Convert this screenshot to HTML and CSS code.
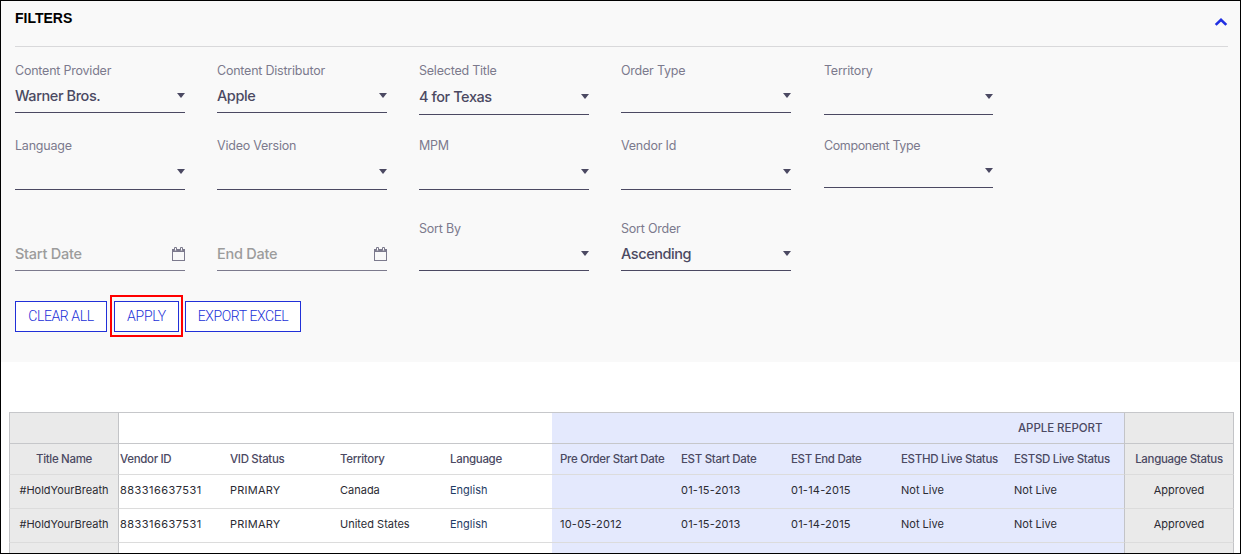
FILE: index.html
```html
<!DOCTYPE html>
<html lang="en">
<head>
<meta charset="utf-8">
<title>Filters</title>
<link rel="stylesheet" href="styles.css">
</head>
<body>
<div class="frame">
  <section class="filters">
    <header class="filters-head">
      <h1 class="filters-title">FILTERS</h1>
      <svg class="chevron" width="14" height="10" viewBox="0 0 14 10"><path d="M1.7 7.9 L7 2.7 L12.3 7.9" fill="none" stroke="#2130e2" stroke-width="2.6"/></svg>
    </header>
    <div class="fields">
      <div class="field"><span class="label">Content Provider</span><div class="control"><span class="value">Warner Bros.</span><i class="arrow"></i></div></div>
      <div class="field"><span class="label">Content Distributor</span><div class="control"><span class="value">Apple</span><i class="arrow"></i></div></div>
      <div class="field"><span class="label">Selected Title</span><div class="control tall"><span class="value">4 for Texas</span><i class="arrow"></i></div></div>
      <div class="field"><span class="label">Order Type</span><div class="control"><i class="arrow"></i></div></div>
      <div class="field last"><span class="label">Territory</span><div class="control tall"><i class="arrow"></i></div></div>

      <div class="field"><span class="label">Language</span><div class="control tall"><i class="arrow"></i></div></div>
      <div class="field"><span class="label">Video Version</span><div class="control tall"><i class="arrow"></i></div></div>
      <div class="field"><span class="label">MPM</span><div class="control tall"><i class="arrow"></i></div></div>
      <div class="field"><span class="label">Vendor Id</span><div class="control tall"><i class="arrow"></i></div></div>
      <div class="field last"><span class="label component">Component Type</span><div class="control"><i class="arrow"></i></div></div>

      <div class="field"><span class="label"></span><div class="control date"><span class="value">Start Date</span><svg class="calendar" width="13" height="14" viewBox="0 0 13 14"><path d="M0 2h13v12H0z M1 5v8h11V5z" fill="#7c7a8d" fill-rule="evenodd"/><path d="M2.5 3.5v-3h2v3M8.5 3.5v-3h2v3" fill="#f9f9f9" stroke="#7c7a8d"/></svg></div></div>
      <div class="field"><span class="label"></span><div class="control date"><span class="value">End Date</span><svg class="calendar" width="13" height="14" viewBox="0 0 13 14"><path d="M0 2h13v12H0z M1 5v8h11V5z" fill="#7c7a8d" fill-rule="evenodd"/><path d="M2.5 3.5v-3h2v3M8.5 3.5v-3h2v3" fill="#f9f9f9" stroke="#7c7a8d"/></svg></div></div>
      <div class="field"><span class="label">Sort By</span><div class="control"><i class="arrow"></i></div></div>
      <div class="field"><span class="label">Sort Order</span><div class="control"><span class="value">Ascending</span><i class="arrow"></i></div></div>
    </div>
    <div class="actions">
      <button class="btn btn-clear">CLEAR ALL</button>
      <div class="highlight"><button class="btn btn-apply">APPLY</button></div>
      <button class="btn btn-export">EXPORT EXCEL</button>
    </div>
  </section>

  <div class="report">
    <div class="row head group">
      <div class="cell pin"></div><div class="cell"></div><div class="cell"></div><div class="cell"></div><div class="cell"></div>
      <div class="cell blue"></div><div class="cell blue"></div><div class="cell blue"></div><div class="cell blue"></div><div class="cell blue report-name"><span>APPLE REPORT</span></div>
      <div class="cell pin end"></div>
    </div>
    <div class="row head">
      <div class="cell pin"><span>Title Name</span></div><div class="cell"><span>Vendor ID</span></div><div class="cell"><span>VID Status</span></div><div class="cell"><span>Territory</span></div><div class="cell"><span>Language</span></div>
      <div class="cell blue"><span>Pre Order Start Date</span></div><div class="cell blue"><span>EST Start Date</span></div><div class="cell blue"><span>EST End Date</span></div><div class="cell blue"><span>ESTHD Live Status</span></div><div class="cell blue"><span>ESTSD Live Status</span></div>
      <div class="cell pin end"><span>Language Status</span></div>
    </div>
    <div class="row">
      <div class="cell pin"><span>#HoldYourBreath</span></div><div class="cell"><span class="num">883316637531</span></div><div class="cell"><span class="code">PRIMARY</span></div><div class="cell"><span>Canada</span></div><div class="cell"><span class="lang">English</span></div>
      <div class="cell blue"></div><div class="cell blue"><span class="code">01-15-2013</span></div><div class="cell blue"><span class="code">01-14-2015</span></div><div class="cell blue"><span>Not Live</span></div><div class="cell blue"><span>Not Live</span></div>
      <div class="cell pin end"><span>Approved</span></div>
    </div>
    <div class="row">
      <div class="cell pin"><span>#HoldYourBreath</span></div><div class="cell"><span class="num">883316637531</span></div><div class="cell"><span class="code">PRIMARY</span></div><div class="cell"><span>United States</span></div><div class="cell"><span class="lang">English</span></div>
      <div class="cell blue"><span class="code">10-05-2012</span></div><div class="cell blue"><span class="code">01-15-2013</span></div><div class="cell blue"><span class="code">01-14-2015</span></div><div class="cell blue"><span>Not Live</span></div><div class="cell blue"><span>Not Live</span></div>
      <div class="cell pin end"><span>Approved</span></div>
    </div>
    <div class="row">
      <div class="cell pin"></div><div class="cell"></div><div class="cell"></div><div class="cell"></div><div class="cell"></div>
      <div class="cell blue"></div><div class="cell blue"></div><div class="cell blue"></div><div class="cell blue"></div><div class="cell blue"></div>
      <div class="cell pin end"></div>
    </div>
  </div>
</div>
</body>
</html>
```
FILE: styles.css
```css
* { box-sizing: border-box; }
body { margin: 0; background: #fff; font-family: Inter, "Liberation Sans", sans-serif; }
.frame { width: 1241px; height: 554px; border: 1px solid #000; overflow: hidden; }

.filters { height: 361px; padding: 0 12px 0 14px; background: #f9f9f9; }
.filters-head { display: flex; justify-content: space-between; height: 46px; border-bottom: 1px solid #d9d9db; }
.filters-title { margin: 9px 0 0; font: bold 14px/17px "Liberation Sans", sans-serif; color: #000; }
.chevron { margin: 16px 0 0; }

.fields { display: grid; grid-template-columns: repeat(5, 170px); column-gap: 32px; grid-template-rows: 75px 83px 50px; padding-top: 16px; }
.last { padding-left: 1px; }
.label { display: block; height: 16px; font-size: 12.5px; line-height: 16px; color: #7c7a8d; white-space: nowrap; letter-spacing: -0.22px; }
.component { letter-spacing: -0.4px; }
.control { display: flex; align-items: center; justify-content: space-between; height: 34px; border-bottom: 1px solid #4b4962; }
.tall { height: 36px; }
.value { font-size: 14.5px; font-weight: 500; letter-spacing: -0.42px; color: #4b4962; line-height: 18px; padding-top: 1px; }
.arrow { margin-left: auto; border: 4px solid transparent; border-top: 5px solid #4b4962; border-bottom: 0; }
.date { border-bottom-color: #7c7a8d; }
.date .value { color: #9c9c9c; letter-spacing: -0.25px; padding-top: 0; }

.actions { display: flex; align-items: flex-start; height: 42px; margin-top: 24px; }
.btn { height: 31px; margin-top: 6px; padding: 0; border: 1px solid #2130d8; background: #fff; color: #2130d8; font: 300 14px/29px Roboto, sans-serif; letter-spacing: -0.4px; white-space: nowrap; }
.btn-clear { width: 92px; }
.highlight { display: flex; margin: 0 2px 0 3px; padding: 4px 2px 3px; border: 2px solid #f00; }
.btn-apply { width: 65px; margin-top: 0; letter-spacing: -0.2px; }
.btn-export { width: 116px; }

.report { margin: 50px 0 0 8px; width: 1225px; }
.row { display: grid; grid-template-columns: 109px 110px 110px 110px 104px 121px 110px 110px 113px 118px 110px; height: 34px; font-size: 11px; color: #2b2b33; }
.row:not(.head) .cell { padding-bottom: 3px; }
.head { height: 31px; font-size: 11.5px; font-weight: 500; color: #4b4962; letter-spacing: -0.32px; }
.group { letter-spacing: -0.05px; }
.cell { display: flex; align-items: center; padding-left: 2px; border-top: 1px solid #dcdcdc; white-space: nowrap; }
.head .cell { border-top-color: #c6c7ca; }
.blue { padding-left: 8px; background: #e4e9fd; }
.pin { justify-content: center; padding: 0; background: #eaeaea; border-left: 1px solid #c3c4c7; }
.pin + .cell { padding-left: 1px; border-left: 1px solid #c3c4c7; }
.end { border-right: 1px solid #c3c4c7; }
.report-name { padding-left: 12px; }
.lang { color: #1f3c66; }
.num { letter-spacing: 0.45px; }
.code { letter-spacing: 0.22px; }
```
